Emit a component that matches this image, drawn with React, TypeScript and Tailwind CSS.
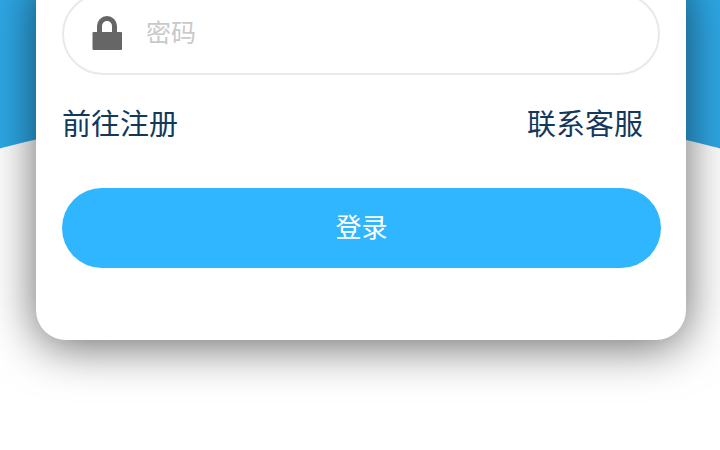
import React from "react";

function Lock() {
  return (
    <svg width="30" height="36" viewBox="0 0 30 36" className="shrink-0">
      <path d="M7.5 18V10a7.5 7.5 0 0 1 15 0v8" fill="none" stroke="#666666" strokeWidth="5" />
      <rect x="0.5" y="16" width="29.5" height="18" rx="1" fill="#666666" />
    </svg>
  );
}

export default function App() {
  return (
    <div className="relative h-[450px] w-[720px] overflow-hidden bg-white font-['Liberation_Sans','Noto_Sans_CJK_SC',sans-serif]">
      <div className="absolute left-0 top-0 h-[160px] w-full bg-[#2ea8e6]" />
      <div className="absolute left-[-140px] top-[108px] h-[264px] w-[1000px] rounded-[50%] bg-white" />
      <div className="relative ml-[36px] mt-[-30px] h-[370px] w-[650px] rounded-[30px] bg-white px-[26px] pt-[23px] shadow-[0_6px_48px_rgba(0,0,0,0.6)]">
        <div className="flex h-[82px] w-[598px] items-center rounded-[41px] border-2 border-[#e9e9e9] pl-[28px]">
          <Lock />
          <span className="ml-[24px] text-[25px] text-[#c9c9c9]">密码</span>
        </div>
        <div className="mt-[30px] flex h-[40px] items-center justify-between pr-[17px] text-[29px] leading-[40px] text-[#12395c]">
          <span>前往注册</span>
          <span>联系客服</span>
        </div>
        <button className="mt-[43px] flex h-[80px] w-[599px] items-center justify-center rounded-[40px] bg-[#2fb6ff] text-[26px] text-white">
          登录
        </button>
      </div>
    </div>
  );
}
